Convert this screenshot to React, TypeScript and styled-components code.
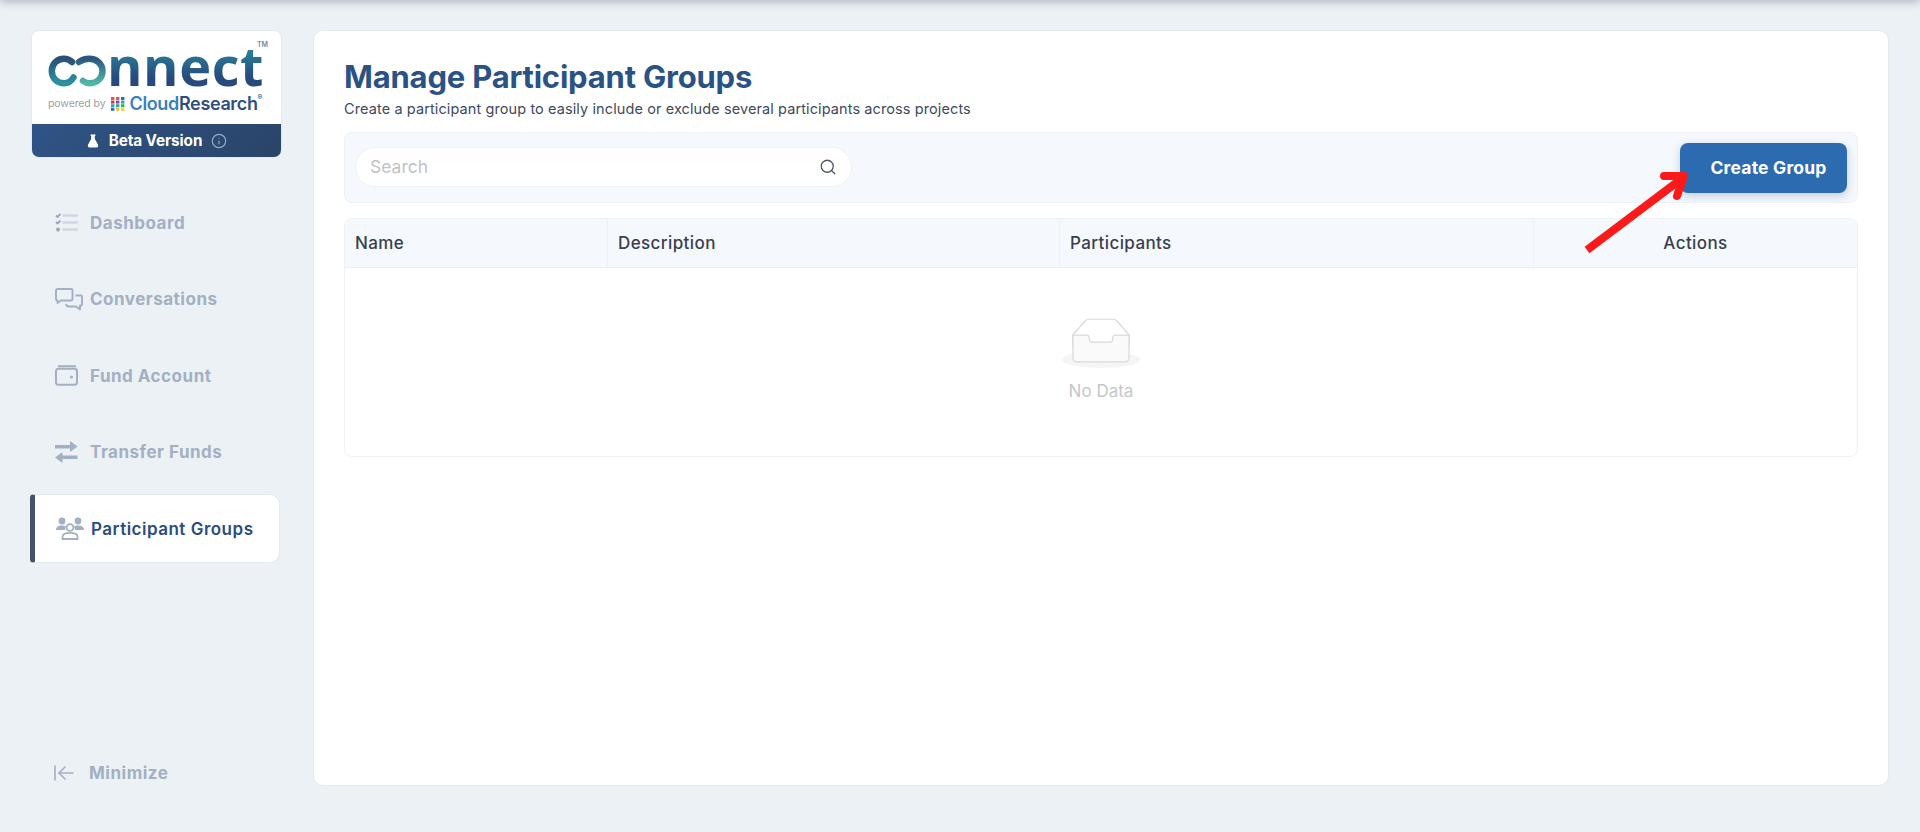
import React from 'react';
import styled, { createGlobalStyle } from 'styled-components';
import { ArrowLeftToLine, FlaskConical, Info, Search } from 'lucide-react';

const FONT = `Inter, "Liberation Sans", sans-serif`;

const GlobalStyle = createGlobalStyle`
  * { box-sizing: border-box; }
  html, body { margin: 0; padding: 0; height: 100%; }
  body { background: #ecf1f6; font-family: ${FONT}; }
`;

const DashboardIcon = () => (
  <svg width="24" height="20" viewBox="0 0 24 20" fill="none">
    <path d="M1 2.5 2.6 4 5.5 1M1 9 2.6 10.5 5.5 7.5" stroke="#98a6ba" strokeWidth="1.8" />
    <circle cx="3" cy="16.5" r="2" fill="#98a6ba" />
    <path d="M8.5 2.5H22M8.5 9.5H22M8.5 16.5H22" stroke="#cfd7e2" strokeWidth="2.4" strokeLinecap="round" />
  </svg>
);

const ConversationsIcon = () => (
  <svg width="28" height="23" viewBox="0 0 28 23" fill="none" stroke="#a3afc2" strokeWidth="1.9" strokeLinejoin="round">
    <path d="M1 2.5C1 1.6 1.6 1 2.5 1H16C16.9 1 17.5 1.6 17.5 2.5V11C17.5 11.9 16.9 12.5 16 12.5H6L2.5 15V12.5C1.6 12.5 1 11.9 1 11Z" />
    <path d="M20.5 7.5H26C26.6 7.5 27 7.9 27 8.5V16.5C27 17.2 26.6 17.5 26 17.5H25V21.5L21 18.5H14C12.5 18.5 11.5 18 11 16" />
  </svg>
);

const WalletIcon = () => (
  <svg width="23" height="21" viewBox="0 0 23 21" fill="none" stroke="#a3afc2" strokeWidth="2">
    <path d="M3 1.2H21" />
    <rect x="1" y="3.8" width="21" height="16" rx="2.5" />
    <circle cx="16.5" cy="12" r="0.6" fill="#a3afc2" />
  </svg>
);

const TransferIcon = () => (
  <svg width="23" height="22" viewBox="0 0 23 22" fill="#a3afc2">
    <path d="M0 4H15V0L22.5 5.5L15 11V7.5H0Z" />
    <path d="M22.5 14.5H7.5V11L0 16.5L7.5 22V18H22.5Z" />
  </svg>
);

const GroupsIcon = () => (
  <svg width="28" height="23" viewBox="0 0 28 23" fill="#a3afc2">
    <circle cx="6" cy="4" r="3.4" />
    <circle cx="22" cy="4" r="3.4" />
    <path d="M0 13C0 10 2.5 8.6 6 8.6C7.6 8.6 9 9 10 9.6C9.2 10.8 9 12 9.2 13Z" />
    <path d="M28 13C28 10 25.5 8.6 22 8.6C20.4 8.6 19 9 18 9.6C18.8 10.8 19 12 18.8 13Z" />
    <circle cx="14" cy="10.5" r="3.4" fill="none" stroke="#a3afc2" strokeWidth="1.8" />
    <path d="M6.5 22V19.8C6.5 17 9.5 15.8 14 15.8C18.5 15.8 21.5 17 21.5 19.8V22Z" fill="none" stroke="#a3afc2" strokeWidth="1.8" />
  </svg>
);

const EmptyIcon = () => (
  <svg width="78" height="50" viewBox="0 0 64 41">
    <g transform="translate(0 1)" fill="none" fillRule="evenodd">
      <ellipse fill="#f5f5f5" cx="32" cy="33" rx="32" ry="7" />
      <g fillRule="nonzero" stroke="#d9d9d9">
        <path d="M55 12.76L44.854 1.258C44.367.474 43.656 0 42.907 0H21.093c-.749 0-1.46.474-1.947 1.257L9 12.761V22h46v-9.24z" />
        <path
          d="M41.613 15.931c0-1.605.994-2.93 2.227-2.931H55v18.137C55 33.26 53.68 35 52.05 35h-40.1C10.32 35 9 33.259 9 31.137V13h11.16c1.233 0 2.227 1.323 2.227 2.928v.022c0 1.605 1.005 2.901 2.237 2.901h14.752c1.232 0 2.237-1.308 2.237-2.913v-.007z"
          fill="#fafafa"
        />
      </g>
    </g>
  </svg>
);

const LogoRings = () => (
  <svg width="60" height="32" viewBox="0 0 60 32" fill="none" strokeWidth="6.5" strokeLinecap="round">
    <defs>
      <linearGradient id="ringC" x1="0" y1="0" x2="0" y2="1">
        <stop offset="0" stopColor="#2b4f78" />
        <stop offset="1" stopColor="#2b93a0" />
      </linearGradient>
      <linearGradient id="ringO" x1="0" y1="0" x2="0" y2="1">
        <stop offset="0" stopColor="#2a5680" />
        <stop offset="1" stopColor="#50b8a8" />
      </linearGradient>
    </defs>
    <path d="M24 7C21.5 4.8 19 3.8 16 3.8C9 3.8 3.8 9 3.8 16C3.8 23 9 28.2 16 28.2C20 28.2 23.5 26 25.5 22.5" stroke="url(#ringC)" />
    <path d="M31 7C34 4.8 37 3.8 41 3.8C49 3.8 54.5 9 54.5 16C54.5 23 49 28.2 42 28.2C39 28.2 37 27.5 35 26" stroke="url(#ringO)" />
  </svg>
);

const ResearchGrid = () => (
  <svg width="14" height="14" viewBox="0 0 14 14">
    {['#e2574c', '#d6334a', '#2fa6a0', '#2c6fb3'].map((c, i) => (
      <rect key={i} x={0} y={i * 3.6} width="3.4" height="3" fill={c} />
    ))}
    {['#e2574c', '#8e44ad', '#2fa6a0', '#e8c53a'].map((c, i) => (
      <rect key={i} x={5} y={i * 3.6} width="3.4" height="3" fill={c} />
    ))}
    {['#2c6fb3', '#2fa6a0', '#3fae5a', '#e8d53a'].map((c, i) => (
      <rect key={i} x={10} y={i * 3.6} width="3.4" height="3" fill={c} />
    ))}
  </svg>
);

const navItems = [
  { label: 'Dashboard', icon: <DashboardIcon /> },
  { label: 'Conversations', icon: <ConversationsIcon /> },
  { label: 'Fund Account', icon: <WalletIcon /> },
  { label: 'Transfer Funds', icon: <TransferIcon /> },
  { label: 'Participant Groups', icon: <GroupsIcon />, active: true },
];

const columns = [
  { label: 'Name', width: 263 },
  { label: 'Description', width: 452 },
  { label: 'Participants', width: 474 },
  { label: 'Actions', width: 0, center: true },
];

export default function App() {
  return (
    <>
      <GlobalStyle />
      <Page>
        <Sidebar>
          <LogoCard>
            <LogoArea>
              <WordMark>
                <LogoRings />
                <WordText>nnect</WordText>
                <TradeMark>TM</TradeMark>
              </WordMark>
              <PoweredRow>
                <PoweredText>powered by</PoweredText>
                <ResearchGrid />
                <BrandText>
                  <BrandCloud>Cloud</BrandCloud>
                  <BrandResearch>Research</BrandResearch>
                  <BrandMark>®</BrandMark>
                </BrandText>
              </PoweredRow>
            </LogoArea>
            <BetaBand>
              <FlaskConical size={14} color="#ffffff" fill="#ffffff" strokeWidth={2} />
              <BetaText>Beta Version</BetaText>
              <Info size={16} color="#98a9c2" strokeWidth={1.8} />
            </BetaBand>
          </LogoCard>

          <NavList>
            {navItems.map((item) => (
              <NavItem key={item.label} $active={item.active}>
                <NavIcon>{item.icon}</NavIcon>
                <NavLabel $active={item.active}>{item.label}</NavLabel>
              </NavItem>
            ))}
          </NavList>

          <MinimizeRow>
            <ArrowLeftToLine size={24} color="#a3afc2" strokeWidth={1.6} />
            <NavLabel>Minimize</NavLabel>
          </MinimizeRow>
        </Sidebar>

        <MainPanel>
          <Title>Manage Participant Groups</Title>
          <Subtitle>Create a participant group to easily include or exclude several participants across projects</Subtitle>

          <Toolbar>
            <SearchBox>
              <SearchInput placeholder="Search" />
              <Search size={18} color="#4a5568" strokeWidth={1.7} />
            </SearchBox>
            <CreateButton>Create Group</CreateButton>
            <ArrowOverlay width="112" height="86" viewBox="0 0 112 86" fill="none" stroke="#fa1a1a" strokeWidth="8">
              <path d="M7 79 100 9" />
              <path d="M84 5H104L97 25" strokeLinejoin="round" strokeLinecap="round" />
            </ArrowOverlay>
          </Toolbar>

          <Table>
            <TableHead>
              {columns.map((col) => (
                <HeadCell key={col.label} $width={col.width} $center={col.center}>
                  {col.label}
                </HeadCell>
              ))}
            </TableHead>
            <EmptyBody>
              <EmptyIcon />
              <EmptyText>No Data</EmptyText>
            </EmptyBody>
          </Table>
        </MainPanel>
      </Page>
    </>
  );
}

const Page = styled.div`
  position: relative;
  display: flex;
  gap: 31px;
  height: 832px;
  padding: 30px 31px 46px 31px;
  overflow: hidden;
  &::before {
    content: '';
    position: absolute;
    top: -10px;
    left: 0;
    right: 0;
    height: 10px;
    box-shadow: 0 2px 8px rgba(60, 70, 90, 0.35);
  }
`;

const Sidebar = styled.aside`
  display: flex;
  flex-direction: column;
  width: 251px;
  flex-shrink: 0;
`;

const LogoCard = styled.div`
  height: 128px;
  display: flex;
  flex-direction: column;
  border-radius: 8px;
  border: 1px solid #e3e9f1;
  overflow: hidden;
  background: #ffffff;
`;

const LogoArea = styled.div`
  flex: 1;
  display: flex;
  flex-direction: column;
  padding: 14px 0 0 16px;
`;

const WordMark = styled.div`
  position: relative;
  display: flex;
  align-items: flex-end;
  height: 42px;
`;

const WordText = styled.span`
  display: block;
  height: 43px;
  font-family: "Open Sans", sans-serif;
  font-weight: 700;
  font-size: 54px;
  line-height: 43px;
  margin-left: -1px;
  letter-spacing: 0.6px;
  background: linear-gradient(180deg, #2a7b98 20%, #27497c 80%);
  -webkit-background-clip: text;
  background-clip: text;
  color: transparent;
`;

const TradeMark = styled.span`
  position: absolute;
  left: 209px;
  top: -5px;
  font-size: 7px;
  font-weight: 600;
  color: #6b8fa8;
`;

const PoweredRow = styled.div`
  display: flex;
  align-items: center;
  margin-top: 6px;
  gap: 6px;
`;

const PoweredText = styled.span`
  font-size: 10.5px;
  color: #9a9fa6;
  letter-spacing: -0.1px;
  white-space: nowrap;
`;

const BrandText = styled.span`
  display: flex;
  align-items: flex-start;
  margin-left: -2px;
  font-size: 18px;
  font-weight: 600;
  white-space: nowrap;
  letter-spacing: -0.35px;
`;

const BrandCloud = styled.span`
  color: #3a80bd;
`;

const BrandResearch = styled.span`
  color: #2f4f7e;
`;

const BrandMark = styled.span`
  font-size: 7px;
  color: #2f4f7e;
`;

const BetaBand = styled.div`
  height: 33px;
  display: flex;
  align-items: center;
  justify-content: center;
  gap: 9px;
  background: linear-gradient(135deg, #2f5486 0%, #2a4468 100%);
`;

const BetaText = styled.span`
  color: #ffffff;
  font-size: 15.3px;
  font-weight: 700;
  letter-spacing: -0.1px;
`;

const NavList = styled.nav`
  display: flex;
  flex-direction: column;
  gap: 7.5px;
  margin: 30px 2px 0 -1px;
`;

const NavItem = styled.div<{ $active?: boolean }>`
  height: 69px;
  display: flex;
  align-items: center;
  gap: 7px;
  padding-left: ${(p) => (p.$active ? '21px' : '25px')};
  border-radius: ${(p) => (p.$active ? '4px 10px 10px 4px' : '0')};
  background: ${(p) => (p.$active ? '#ffffff' : 'transparent')};
  border: ${(p) => (p.$active ? '1px solid #e3e9f1' : '1px solid transparent')};
  border-left: ${(p) => (p.$active ? '5px solid #44526c' : '0')};
`;

const NavIcon = styled.span`
  display: flex;
  justify-content: flex-start;
  align-items: center;
  width: 28px;
`;

const NavLabel = styled.span<{ $active?: boolean }>`
  font-size: 17px;
  font-weight: ${(p) => (p.$active ? 600 : 700)};
  color: ${(p) => (p.$active ? '#2a4d7f' : '#a3afc2')};
  letter-spacing: 0.5px;
  white-space: nowrap;
`;

const MinimizeRow = styled.div`
  margin-top: auto;
  display: flex;
  align-items: center;
  gap: 13px;
  height: 26px;
  padding-left: 21px;
`;

const MainPanel = styled.main`
  flex: 1;
  min-width: 0;
  display: flex;
  flex-direction: column;
  background: #ffffff;
  border: 1px solid #e3e9f1;
  border-radius: 10px;
  padding: 28px 30px 0 30px;
`;

const Title = styled.h1`
  margin: 0;
  font-size: 31px;
  line-height: 36px;
  font-weight: 700;
  color: #2b5285;
  letter-spacing: -0.2px;
`;

const Subtitle = styled.p`
  margin: 4px 0 0;
  font-size: 14.5px;
  line-height: 20px;
  letter-spacing: 0.1px;
  color: #404a5c;
`;

const Toolbar = styled.div`
  position: relative;
  height: 71px;
  margin-top: 13px;
  display: flex;
  align-items: center;
  justify-content: space-between;
  padding: 0 10px 0 10px;
  background: #f5f8fc;
  border: 1px solid #eef2f7;
  border-radius: 8px;
`;

const SearchBox = styled.div`
  width: 497px;
  height: 40px;
  margin-top: -1px;
  display: flex;
  align-items: center;
  padding: 0 14px 0 12px;
  background: #ffffff;
  border: 1px solid #eef2f7;
  border-radius: 20px;
`;

const SearchInput = styled.input`
  flex: 1;
  border: 0;
  outline: none;
  background: transparent;
  font-family: ${FONT};
  font-size: 17.5px;
  padding: 0 2px 2px;
  &::placeholder {
    color: #bfc3c9;
  }
`;

const CreateButton = styled.button`
  width: 167px;
  height: 50px;
  border: 0;
  border-radius: 8px;
  background: #2d6bb0;
  color: #ffffff;
  font-family: ${FONT};
  font-size: 17.5px;
  font-weight: 700;
  letter-spacing: 0.2px;
  padding: 0 0 0 10px;
  box-shadow: 0 3px 8px rgba(45, 80, 130, 0.25);
`;

const ArrowOverlay = styled.svg`
  position: absolute;
  right: 165px;
  top: 38px;
`;

const Table = styled.div`
  margin-top: 15px;
  height: 239px;
  border: 1px solid #eef2f7;
  border-radius: 8px;
  overflow: hidden;
`;

const TableHead = styled.div`
  display: flex;
  height: 49px;
  background: #f5f8fc;
  border-bottom: 1px solid #eaeff5;
`;

const HeadCell = styled.div<{ $width: number; $center?: boolean }>`
  display: flex;
  align-items: center;
  justify-content: ${(p) => (p.$center ? 'center' : 'flex-start')};
  flex: ${(p) => (p.$center ? 1 : 'none')};
  width: ${(p) => p.$width + 'px'};
  padding-left: ${(p) => (p.$center ? '0' : '10px')};
  font-size: 17px;
  font-weight: 500;
  letter-spacing: 0.4px;
  color: #384050;
  &:not(:last-child) {
    border-right: 1px solid #edf1f6;
  }
`;

const EmptyBody = styled.div`
  display: flex;
  flex-direction: column;
  align-items: center;
  padding-top: 50px;
`;

const EmptyText = styled.div`
  margin-top: 13px;
  font-size: 17px;
  color: #c4c7cb;
`;
